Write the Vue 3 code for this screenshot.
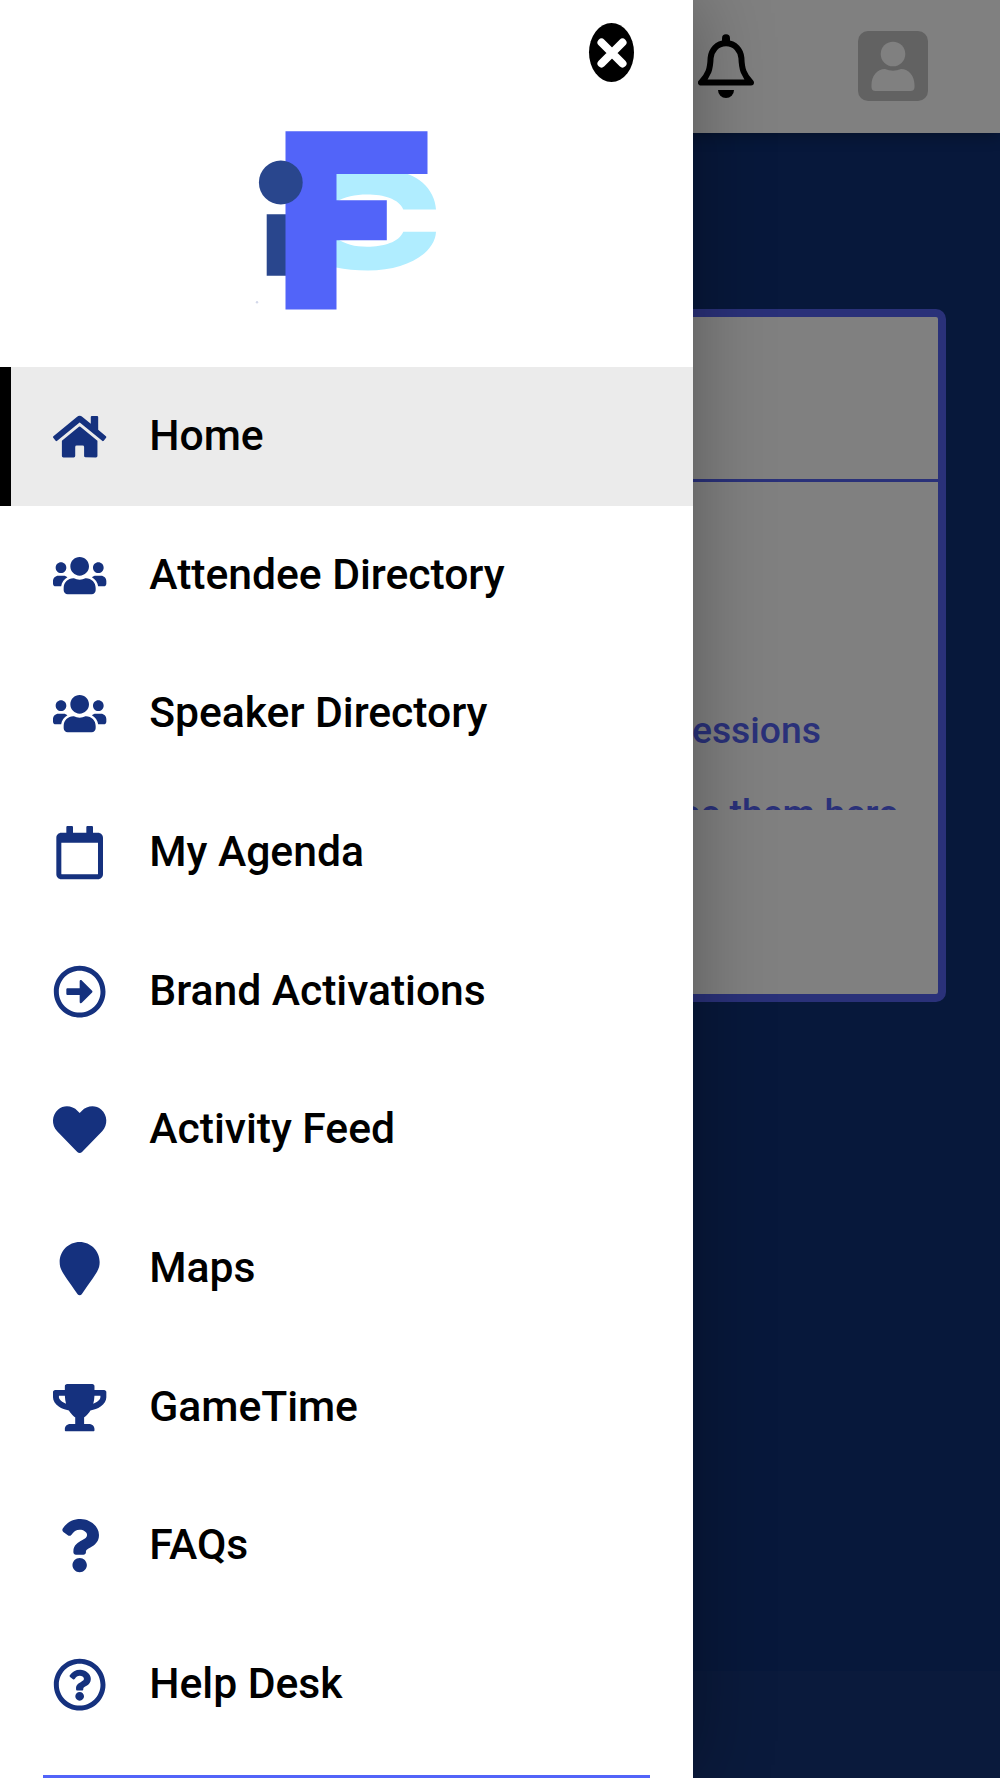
<script setup>
import { ref } from 'vue'

const active = ref('Home')

const icons = {
  home: {
    box: '0 0 576 512',
    path: 'M280.37 148.26L96 300.11V464a16 16 0 0 0 16 16l112.06-.29a16 16 0 0 0 15.92-16V368a16 16 0 0 1 16-16h64a16 16 0 0 1 16 16v95.64a16 16 0 0 0 16 16.05L464 480a16 16 0 0 0 16-16V300L295.67 148.26a12.19 12.19 0 0 0-15.3 0zM571.6 251.47L488 182.56V44.05a12 12 0 0 0-12-12h-56a12 12 0 0 0-12 12v72.61L318.47 43a48 48 0 0 0-61 0L4.34 251.47a12 12 0 0 0-1.6 16.9l25.5 31A12 12 0 0 0 45.15 301l235.22-193.74a12.19 12.19 0 0 1 15.3 0L530.9 301a12 12 0 0 0 16.9-1.6l25.5-31a12 12 0 0 0-1.7-16.93z',
  },
  users: {
    box: '0 0 640 512',
    path: 'M96 224c35.3 0 64-28.7 64-64s-28.7-64-64-64-64 28.7-64 64 28.7 64 64 64zm448 0c35.3 0 64-28.7 64-64s-28.7-64-64-64-64 28.7-64 64 28.7 64 64 64zm32 32h-64c-17.6 0-33.5 7.1-45.1 18.6 40.3 22.1 68.9 62 75.1 109.4h66c17.7 0 32-14.3 32-32v-32c0-35.3-28.7-64-64-64zm-256 0c61.9 0 112-50.1 112-112S381.9 32 320 32 208 82.1 208 144s50.1 112 112 112zm76.8 32h-8.3c-20.8 10-43.9 16-68.5 16s-47.6-6-68.5-16h-8.3C179.6 288 128 339.6 128 403.2V432c0 26.5 21.5 48 48 48h288c26.5 0 48-21.5 48-48v-28.8c0-63.6-51.6-115.2-115.2-115.2zm-223.7-13.4C161.5 263.1 145.6 256 128 256H64c-35.3 0-64 28.7-64 64v32c0 17.7 14.3 32 32 32h65.9c6.3-47.4 34.9-87.3 75.2-109.4z',
  },
  calendar: {
    box: '0 0 448 512',
    path: 'M400 64h-48V12c0-6.6-5.4-12-12-12h-40c-6.6 0-12 5.4-12 12v52H160V12c0-6.6-5.4-12-12-12h-40c-6.6 0-12 5.4-12 12v52H48C21.5 64 0 85.5 0 112v352c0 26.5 21.5 48 48 48h352c26.5 0 48-21.5 48-48V112c0-26.5-21.5-48-48-48zm-6 400H54c-3.3 0-6-2.7-6-6V160h352v298c0 3.3-2.7 6-6 6z',
  },
  arrow: {
    box: '0 0 512 512',
    path: 'M504 256C504 119 393 8 256 8S8 119 8 256s111 248 248 248 248-111 248-248zm-448 0c0-110.500 89.500-200 200-200s200 89.500 200 200-89.500 200-200 200S56 366.500 56 256zm72 20v-40c0-6.600 5.400-12 12-12h116v-67c0-10.700 12.900-16 20.500-8.500l99 99c4.700 4.700 4.700 12.300 0 17l-99 99c-7.600 7.600-20.500 2.200-20.500-8.500v-67H140c-6.600 0-12-5.400-12-12z',
  },
  heart: {
    box: '0 0 512 512',
    path: 'M462.3 62.6C407.5 15.9 326 24.3 275.7 76.2L256 96.5l-19.7-20.3C186.1 24.3 104.5 15.9 49.7 62.6c-62.8 53.6-66.1 149.8-9.9 207.9l193.5 199.8c12.5 12.9 32.8 12.9 45.3 0l193.5-199.8c56.3-58.1 53-154.3-9.8-207.9z',
  },
  marker: {
    box: '0 0 384 512',
    path: 'M172.268 501.67C26.97 291.031 0 269.413 0 192 0 85.961 85.961 0 192 0s192 85.961 192 192c0 77.413-26.97 99.031-172.268 309.67-9.535 13.774-29.93 13.773-39.464 0z',
  },
  trophy: {
    box: '0 0 576 512',
    path: 'M552 64H448V24c0-13.3-10.7-24-24-24H152c-13.3 0-24 10.7-24 24v40H24C10.7 64 0 74.7 0 88v56c0 35.7 22.5 72.4 61.9 100.7 31.5 22.7 69.8 37.1 110 41.7C203.3 338.5 240 360 240 360v72h-48c-35.3 0-64 20.7-64 56v12c0 6.6 5.4 12 12 12h296c6.6 0 12-5.4 12-12v-12c0-35.3-28.7-56-64-56h-48v-72s36.7-21.5 68.1-73.6c40.3-4.6 78.6-19 110-41.7 39.3-28.3 61.9-65 61.9-100.7V88c0-13.3-10.7-24-24-24zM99.3 192.8C74.9 175.2 64 155.6 64 144v-16h64.2c1 32.6 5.8 61.2 12.8 86.2-15.1-5.2-29.2-12.4-41.7-21.4zM512 144c0 16.1-17.7 36.1-35.3 48.8-12.5 9-26.7 16.2-41.8 21.4 7-25 11.8-53.6 12.8-86.2H512v16z',
  },
  question: {
    box: '0 0 384 512',
    path: 'M202.021 0C122.202 0 70.503 32.703 29.914 91.026c-7.363 10.58-5.093 25.086 5.178 32.874l43.138 32.709c10.373 7.865 25.132 6.026 33.253-4.148 25.049-31.381 43.63-49.449 82.757-49.449 30.764 0 68.816 19.799 68.816 49.631 0 22.552-18.617 34.134-48.993 51.164-35.423 19.86-82.299 44.576-82.299 106.405V320c0 13.255 10.745 24 24 24h72.471c13.255 0 24-10.745 24-24v-5.773c0-42.86 125.268-44.645 125.268-160.627C377.504 66.256 286.902 0 202.021 0zM192 373.459c-38.196 0-69.271 31.075-69.271 69.271 0 38.195 31.075 69.27 69.271 69.27s69.271-31.075 69.271-69.271-31.075-69.27-69.271-69.27z',
  },
  help: {
    box: '0 0 512 512',
    path: 'M256 8C119.043 8 8 119.083 8 256c0 136.997 111.043 248 248 248s248-111.003 248-248C504 119.083 392.957 8 256 8zm0 448c-110.532 0-200-89.431-200-200 0-110.495 89.472-200 200-200 110.491 0 200 89.471 200 200 0 110.53-89.431 200-200 200zm107.244-255.2c0 67.052-72.421 68.084-72.421 92.863V300c0 6.627-5.373 12-12 12h-45.647c-6.627 0-12-5.373-12-12v-8.659c0-35.745 27.1-50.034 47.579-61.516 17.561-9.845 28.324-16.541 28.324-29.579 0-17.246-21.999-28.693-39.784-28.693-23.189 0-33.894 10.977-48.942 29.969-4.057 5.12-11.46 6.071-16.666 2.124l-27.824-21.098c-5.107-3.872-6.251-11.066-2.644-16.363C184.846 131.491 214.94 112 261.794 112c49.071 0 101.45 38.304 101.45 88.8zM298 368c0 23.159-18.841 42-42 42s-42-18.841-42-42 18.841-42 42-42 42 18.841 42 42z',
  },
}

const items = [
  { label: 'Home', icon: 'home' },
  { label: 'Attendee Directory', icon: 'users' },
  { label: 'Speaker Directory', icon: 'users' },
  { label: 'My Agenda', icon: 'calendar' },
  { label: 'Brand Activations', icon: 'arrow' },
  { label: 'Activity Feed', icon: 'heart' },
  { label: 'Maps', icon: 'marker' },
  { label: 'GameTime', icon: 'trophy' },
  { label: 'FAQs', icon: 'question' },
  { label: 'Help Desk', icon: 'help' },
]
</script>

<template>
  <div class="app">
    <!-- page behind the drawer -->
    <main class="page">
      <header class="page__header">
        <svg class="page__bell" viewBox="0 0 56 64">
          <path
            d="M28 3.5v5M28 9.3C18.5 9.3 13.3 16.5 12.6 24C12.2 35 10.5 41 3 48.600H53C45.5 41 43.8 35 43.4 24C42.7 16.5 37.5 9.3 28 9.3Z"
            fill="none"
            stroke="#000"
            stroke-width="6"
            stroke-linejoin="round"
          />
          <path d="M24 8V4.2a4 4 0 0 1 8 0V8z" />
          <path d="M20 56h16a8 8 0 0 1-16 0z" />
        </svg>
        <svg class="page__avatar" viewBox="0 0 70 70">
          <rect width="70" height="70" rx="10" fill="#626262" />
          <circle cx="35" cy="23" r="12.3" fill="#808080" />
          <path
            d="M27 38q8 3.5 16 0c8 0 13.5 7 13.5 16v2q0 4-4 4h-35q-4 0-4-4v-2c0-9 5.5-16 13.5-16z"
            fill="#808080"
          />
        </svg>
      </header>
      <section class="card">
        <div class="card__head"></div>
        <div class="card__body">
          <p class="card__line card__line--first">sessions</p>
          <p class="card__line card__line--second">see them here</p>
        </div>
      </section>
      <footer class="page__footer"></footer>
    </main>

    <aside class="drawer">
      <div class="drawer__top">
        <button class="drawer__close" aria-label="Close">
          <svg viewBox="0 0 30 30">
            <path d="M4.5 4.5l21 21M25.5 4.5l-21 21" stroke="#fff" stroke-width="8" stroke-linecap="round" />
          </svg>
        </button>
      </div>

      <svg class="drawer__logo" viewBox="240 110 220 220">
        <path
          d="M336 170H390C417 172 435 189 436 209.5H403.3C399 199 384 194.5 367 194.5C355 194.5 345 196.5 336 202ZM336 238C345 244.5 355 246.7 367 246.7C384 246.7 399 242 403.3 231.7H436C435 253 407 270.5 368 270.5Q350 270.5 336 267.5Z"
          fill="#b0edff"
        />
        <path d="M266.7 214.3h20v61.4h-20z" fill="#29468d" />
        <path d="M285.5 131.2h142v42.8h-91v26.2h50.3v40h-50.3v69.3h-51z" fill="#5264f9" />
        <circle cx="280.8" cy="182.5" r="21.9" fill="#29468d" />
        <circle cx="257" cy="302.3" r="1.2" fill="#d3d8ea" />
      </svg>

      <nav class="menu">
        <a
          v-for="item in items"
          :key="item.label"
          :class="['menu__item', { 'menu__item--active': active === item.label }]"
          @click="active = item.label"
        >
          <svg class="menu__icon" :viewBox="icons[item.icon].box">
            <path :d="icons[item.icon].path" />
          </svg>
          <span class="menu__label">{{ item.label }}</span>
        </a>
      </nav>
      <div class="drawer__divider"></div>
    </aside>
  </div>
</template>

<style>
body {
  margin: 0;
}
</style>

<style scoped>
.app {
  position: relative;
  height: 1778px;
  overflow: hidden;
  font-family: Roboto, 'Liberation Sans', sans-serif;
}

.page {
  height: 100%;
  display: flex;
  flex-direction: column;
  background: #07183b;
}

.page__header {
  flex: none;
  box-sizing: border-box;
  height: 133px;
  padding: 0 72px 1px 0;
  display: flex;
  align-items: center;
  justify-content: flex-end;
  gap: 104px;
  background: #808080;
  box-shadow: 0 3px 14px rgba(0, 0, 0, 0.3);
}

.page__bell {
  width: 56px;
  height: 64px;
}

.page__avatar {
  width: 70px;
  height: 70px;
}

.card {
  flex: none;
  box-sizing: border-box;
  height: 693px;
  margin: 176px 54px 0;
  border: 8px solid #2a3179;
  border-radius: 10px;
  background: #808080;
}

.card__head {
  height: 162px;
  border-bottom: 3px solid #2a3179;
}

.card__body {
  height: 328px;
  overflow: hidden;
  text-align: right;
  color: #2a3179;
}

.card__line {
  margin: 0;
  font-size: 37.33px;
  font-weight: 500;
  line-height: 44px;
}

.card__line--first {
  padding: 226px 117px 0 0;
}

.card__line--second {
  padding: 39px 40px 0 0;
}

.page__footer {
  margin-top: auto;
  height: 107px;
  background: #0a1a3c;
}

.drawer {
  position: absolute;
  top: 0;
  left: 0;
  width: 693px;
  height: 100%;
  display: flex;
  flex-direction: column;
  background: #fff;
  box-shadow: 0 0 75px rgba(0, 0, 0, 0.32);
}

.drawer__top {
  flex: none;
  box-sizing: border-box;
  height: 110px;
  padding: 23px 59px 0 0;
  display: flex;
  justify-content: flex-end;
  align-items: flex-start;
}

.drawer__close {
  width: 45px;
  height: 59px;
  padding: 0;
  border: 0;
  border-radius: 50%;
  background: #000;
  display: flex;
  align-items: center;
  justify-content: center;
}

.drawer__close svg {
  width: 30px;
  height: 30px;
}

.drawer__logo {
  flex: none;
  width: 220px;
  height: 220px;
  margin-left: 240px;
}

.menu {
  flex: none;
  padding-top: 37.33px;
}

.menu__item {
  box-sizing: border-box;
  height: 138.67px;
  padding-left: 53.33px;
  display: flex;
  align-items: center;
  color: #000;
  cursor: pointer;
}

.menu__item--active {
  padding-left: 42.33px;
  border-left: 11px solid #000;
  background: #ebebeb;
}

.menu__icon {
  width: 53.33px;
  height: 53.33px;
  fill: #15317e;
  overflow: visible;
}

.menu__label {
  margin-left: 42.67px;
  padding-bottom: 3px;
  font-size: 42.67px;
  font-weight: 500;
  letter-spacing: -0.04px;
}

.drawer__divider {
  flex: none;
  height: 5px;
  margin: 20.67px 42.67px 0;
  background: #5264f9;
}
</style>
